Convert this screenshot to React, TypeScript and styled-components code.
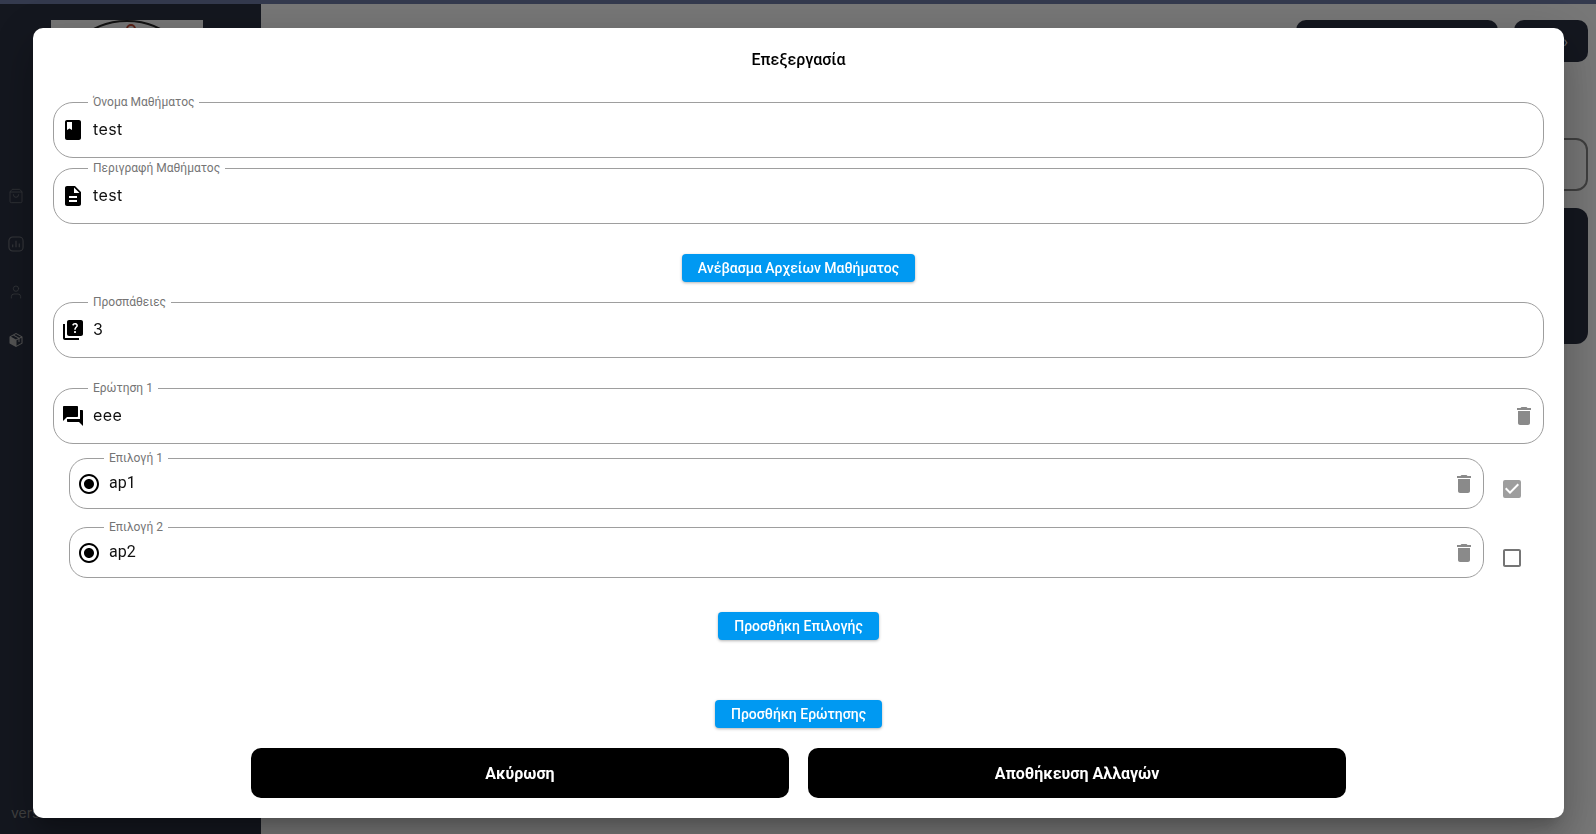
import React from "react";
import styled, { createGlobalStyle } from "styled-components";
import { ShoppingBag, User } from "lucide-react";
import {
  MdBook,
  MdCheckBox,
  MdCheckBoxOutlineBlank,
  MdDelete,
  MdDescription,
  MdQuestionAnswer,
  MdQuiz,
  MdRadioButtonChecked,
} from "react-icons/md";
import { PiPackageFill } from "react-icons/pi";

const GlobalStyle = createGlobalStyle`
  html, body {
    margin: 0;
    height: 100%;
    overflow: hidden;
    font-family: Roboto, "Noto Sans", sans-serif;
  }
  * { box-sizing: border-box; }
`;

const Page = styled.div`
  width: 1596px;
  height: 834px;
  display: flex;
  flex-direction: column;
  background: #f2f2f2;
`;

const TopStrip = styled.div`
  height: 4px;
  background: #68749c;
`;

const Body = styled.div`
  flex: 1;
  display: flex;
  min-height: 0;
`;

const Sidebar = styled.aside`
  width: 261px;
  background: #282e3e;
  padding: 16px 0 13px 8px;
  display: flex;
  flex-direction: column;
`;

const Logo = styled.div`
  width: 152px;
  height: 120px;
  margin-left: 43px;
  background: #eeeeee;
  display: flex;
  justify-content: center;
  overflow: hidden;
`;

const Nav = styled.nav`
  margin-top: 46px;
  display: flex;
  flex-direction: column;
  gap: 28px;
`;

const NavIcon = styled.span<{ $bright?: boolean }>`
  width: 16px;
  height: 20px;
  display: flex;
  align-items: center;
  justify-content: center;
  color: ${(p) => (p.$bright ? "#a8a8a8" : "#6a6d75")};
`;

const Version = styled.div`
  margin-top: auto;
  margin-left: 3px;
  font-family: Inter, sans-serif;
  font-size: 14px;
  color: #808080;
`;

const Main = styled.main`
  flex: 1;
  padding: 16px 8px 0 40px;
  display: flex;
  flex-direction: column;
  background: #eeeeee;
`;

const HeaderRow = styled.div`
  display: flex;
  justify-content: flex-end;
  gap: 16px;
`;

const DarkPill = styled.div<{ $w: number }>`
  width: ${(p) => p.$w}px;
  height: 42px;
  background: #282e3e;
  border-radius: 10px;
  display: flex;
  align-items: center;
  justify-content: flex-end;
  padding-right: 20px;
  color: #cccccc;
`;

const OutlinedBox = styled.div`
  height: 53px;
  margin-top: 76px;
  border: 2px solid #7d7d7d;
  border-radius: 12px;
`;

const DarkPanel = styled.div`
  height: 136px;
  margin-top: 17px;
  background: #282e3e;
  border-radius: 12px;
`;

const Overlay = styled.div`
  position: fixed;
  inset: 0;
  background: rgba(0, 0, 0, 0.5);
  padding: 28px 32px 16px 33px;
`;

const Modal = styled.div`
  height: 790px;
  background: #fff;
  border-radius: 10px;
  padding: 0 20px;
  display: flex;
  flex-direction: column;
  box-shadow: 0 11px 15px -7px rgba(0, 0, 0, 0.2), 0 24px 38px 3px rgba(0, 0, 0, 0.14),
    0 9px 46px 8px rgba(0, 0, 0, 0.12);
`;

const Title = styled.h2`
  margin: 22px 0 0;
  height: 20px;
  font-size: 16px;
  line-height: 20px;
  font-weight: 500;
  text-align: center;
  color: #000;
`;

const Field = styled.div<{ $gap?: number }>`
  position: relative;
  height: 56px;
  margin-top: ${(p) => p.$gap ?? 0}px;
  border: 1px solid #9e9e9e;
  border-radius: 20px;
  display: flex;
  align-items: center;
  padding: 0 7px;
`;

const FieldLabel = styled.label`
  position: absolute;
  top: -8px;
  left: 34px;
  padding: 0 5px;
  background: #fff;
  font-size: 12px;
  line-height: 15px;
  color: #757575;
  white-space: nowrap;
`;

const IconSlot = styled.span`
  width: 24px;
  height: 24px;
  font-size: 24px;
  display: flex;
  align-items: center;
  justify-content: center;
  color: #000;
  flex: none;
`;

const FieldValue = styled.span`
  margin-left: 8px;
  margin-top: -3px;
  flex: 1;
  font-family: Inter, Roboto, sans-serif;
  font-size: 16px;
  letter-spacing: 0.4px;
  color: #111;
`;

const TrashSlot = styled.span`
  width: 24px;
  height: 24px;
  font-size: 24px;
  display: flex;
  color: #8a8a8a;
  flex: none;
`;

const OptionRow = styled.div<{ $gap: number }>`
  display: flex;
  align-items: center;
  margin-top: ${(p) => p.$gap}px;
  padding-left: 16px;
`;

const OptionField = styled(Field)`
  flex: none;
  width: 1415px;
  height: 51px;
  margin-top: 0;
  border-radius: 18px;
`;

const OptionValue = styled(FieldValue)`
  font-family: Roboto, sans-serif;
  letter-spacing: 0;
  margin-top: -2px;
`;

const CheckSlot = styled.span<{ $checked?: boolean }>`
  width: 24px;
  height: 24px;
  font-size: 24px;
  margin: 10px 0 0 16px;
  display: flex;
  color: ${(p) => (p.$checked ? "#9e9e9e" : "#757575")};
`;

const BlueRow = styled.div<{ $gap: number }>`
  display: flex;
  justify-content: center;
  margin-top: ${(p) => p.$gap}px;
`;

const BlueButton = styled.button`
  height: 28px;
  padding: 0 16px;
  border: 0;
  border-radius: 4px;
  background: #0099f2;
  color: #fff;
  font-family: Roboto, sans-serif;
  font-size: 14px;
  font-weight: 500;
  box-shadow: 0 1px 3px rgba(0, 0, 0, 0.3);
`;

const Actions = styled.div`
  display: flex;
  justify-content: center;
  gap: 19px;
  margin-top: 20px;
`;

const BlackButton = styled.button`
  width: 538px;
  height: 50px;
  border: 0;
  border-radius: 10px;
  background: #000;
  color: #fff;
  font-family: Roboto, sans-serif;
  font-size: 16px;
  font-weight: 700;
`;

const ChartIcon = () => (
  <svg width="18" height="18" viewBox="0 0 17 17" fill="none" stroke="currentColor" strokeWidth="1.2">
    <rect x="1" y="1" width="15" height="15" rx="4" />
    <path d="M5 12V9M8.5 12V5M12 12V8" />
  </svg>
);

const LogoMark = () => (
  <svg width="152" height="120" viewBox="0 0 152 120" fill="none">
    <circle cx="76" cy="73" r="72" stroke="#222" strokeWidth="2" />
    <circle cx="80" cy="9" r="4" stroke="#b3402c" strokeWidth="2" />
  </svg>
);

type Option = { label: string; value: string; checked: boolean; gap: number };

const options: Option[] = [
  { label: "Επιλογή 1", value: "ap1", checked: true, gap: 14 },
  { label: "Επιλογή 2", value: "ap2", checked: false, gap: 18 },
];

export default function App() {
  return (
    <>
      <GlobalStyle />
      <Page>
        <TopStrip />
        <Body>
          <Sidebar>
            <Logo>
              <LogoMark />
            </Logo>
            <Nav>
              <NavIcon><ShoppingBag size={18} strokeWidth={1.2} /></NavIcon>
              <NavIcon><ChartIcon /></NavIcon>
              <NavIcon><User size={20} strokeWidth={1.2} /></NavIcon>
              <NavIcon $bright><PiPackageFill size={20} /></NavIcon>
            </Nav>
            <Version>version</Version>
          </Sidebar>
          <Main>
            <HeaderRow>
              <DarkPill $w={202} />
              <DarkPill $w={74}>›</DarkPill>
            </HeaderRow>
            <OutlinedBox />
            <DarkPanel />
          </Main>
        </Body>
      </Page>

      <Overlay>
        <Modal>
          <Title>Επεξεργασία</Title>

          <Field $gap={32}>
            <FieldLabel>Όνομα Μαθήματος</FieldLabel>
            <IconSlot><MdBook /></IconSlot>
            <FieldValue>test</FieldValue>
          </Field>
          <Field $gap={10}>
            <FieldLabel>Περιγραφή Μαθήματος</FieldLabel>
            <IconSlot><MdDescription /></IconSlot>
            <FieldValue>test</FieldValue>
          </Field>

          <BlueRow $gap={30}>
            <BlueButton>Ανέβασμα Αρχείων Μαθήματος</BlueButton>
          </BlueRow>

          <Field $gap={20}>
            <FieldLabel>Προσπάθειες</FieldLabel>
            <IconSlot><MdQuiz /></IconSlot>
            <FieldValue>3</FieldValue>
          </Field>

          <Field $gap={30}>
            <FieldLabel>Ερώτηση 1</FieldLabel>
            <IconSlot><MdQuestionAnswer /></IconSlot>
            <FieldValue>eee</FieldValue>
            <TrashSlot><MdDelete /></TrashSlot>
          </Field>

          {options.map((o) => (
            <OptionRow key={o.label} $gap={o.gap}>
              <OptionField>
                <FieldLabel>{o.label}</FieldLabel>
                <IconSlot><MdRadioButtonChecked /></IconSlot>
                <OptionValue>{o.value}</OptionValue>
                <TrashSlot><MdDelete /></TrashSlot>
              </OptionField>
              <CheckSlot $checked={o.checked}>
                {o.checked ? <MdCheckBox /> : <MdCheckBoxOutlineBlank />}
              </CheckSlot>
            </OptionRow>
          ))}

          <BlueRow $gap={34}>
            <BlueButton>Προσθήκη Επιλογής</BlueButton>
          </BlueRow>
          <BlueRow $gap={60}>
            <BlueButton>Προσθήκη Ερώτησης</BlueButton>
          </BlueRow>

          <Actions>
            <BlackButton>Ακύρωση</BlackButton>
            <BlackButton>Αποθήκευση Αλλαγών</BlackButton>
          </Actions>
        </Modal>
      </Overlay>
    </>
  );
}
